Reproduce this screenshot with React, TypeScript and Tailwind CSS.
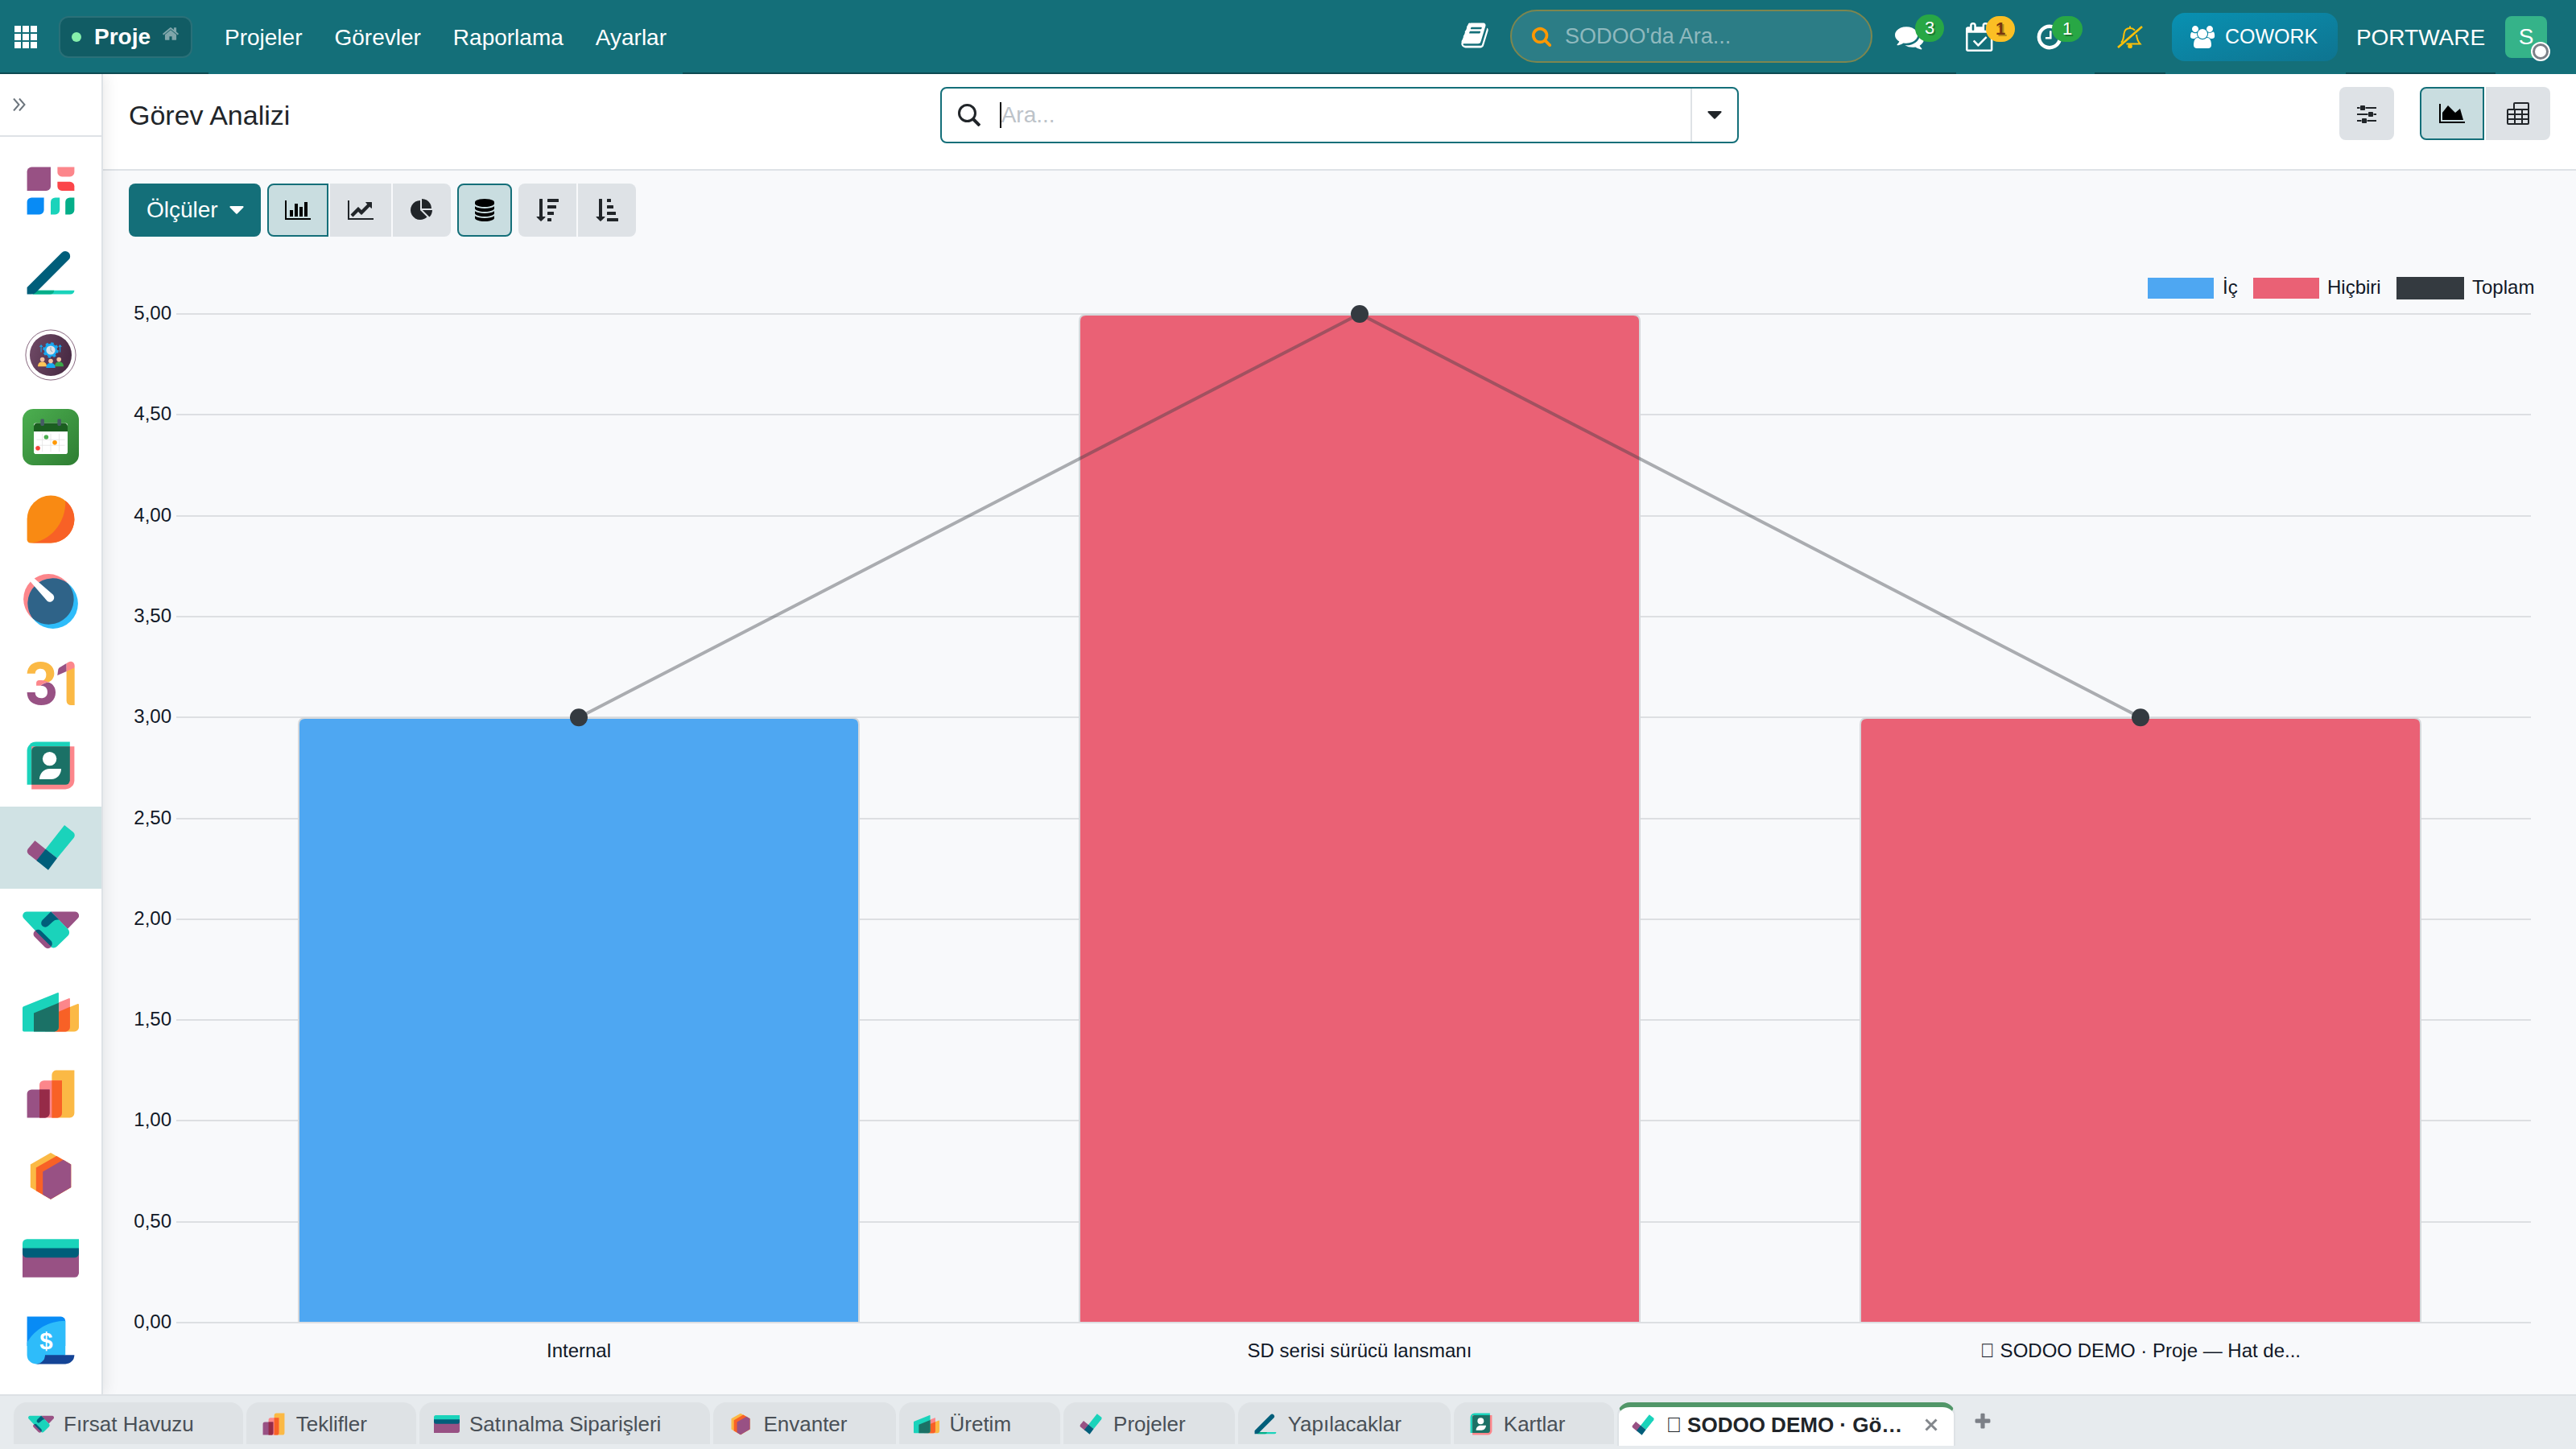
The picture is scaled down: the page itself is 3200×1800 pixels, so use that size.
import { useState } from 'react';
import type { ReactNode } from 'react';
import clsx from 'clsx';

// Font Awesome 4 glyph outlines, drawn on a 1792 unit grid
const FA = {
  home: 'M1472 992v480q0 26-19 45t-45 19h-384v-384h-256v384h-384q-26 0-45-19t-19-45v-480q0-1 .5-3t.5-3l575-474 575 474q1 2 1 6zm223-69l-62 74q-8 9-21 11h-3q-13 0-21-7l-692-577-692 577q-12 8-24 7-13-2-21-11l-62-74q-8-10-7-23.5t11-21.5l719-599q32-26 76-26t76 26l244 204v-195q0-14 9-23t23-9h192q14 0 23 9t9 23v408l219 182q10 8 11 21.5t-7 23.5z',
  book: 'M1703 478q40 57 18 129l-275 906q-19 64-76.5 107.5t-122.5 43.5h-923q-77 0-148.5-53.5t-99.5-131.5q-24-67-2-127 0-4 3-27t4-37q1-8-3-21.5t-3-19.5q2-11 8-21t16.5-23.5 16.5-23.5q23-38 45-91.5t30-91.5q3-10 .5-30t-.5-28q3-11 17-28t17-23q21-36 42-92t25-90q1-9-2.5-32t.5-28q4-13 22-30.5t22-22.5q19-26 42.5-84.5t27.5-96.5q1-8-3-25.5t-2-26.5q2-8 9-18t18-23 17-21q8-12 16.5-30.5t15-35 16-36 19.5-32 26.5-23.5 36-11.5 47.5 5.5l-1 3q38-9 51-9h761q74 0 114 56t18 130l-274 906q-36 119-71.5 153.5t-128.5 34.5h-869q-27 0-38 15-11 16-1 43 24 70 144 70h923q29 0 56-15.5t35-41.5l300-987q7-22 5-57 38 15 59 43zm-1064 2q-4 13 2 22.5t20 9.5h608q13 0 25.5-9.5t16.5-22.5l21-64q4-13-2-22.5t-20-9.5h-608q-13 0-25.5 9.5t-16.5 22.5zm-83 256q-4 13 2 22.5t20 9.5h608q13 0 25.5-9.5t16.5-22.5l21-64q4-13-2-22.5t-20-9.5h-608q-13 0-25.5 9.5t-16.5 22.5z',
  search: 'M1216 832q0-185-131.5-316.5t-316.5-131.5-316.5 131.5-131.5 316.5 131.5 316.5 316.5 131.5 316.5-131.5 131.5-316.5zm512 832q0 52-38 90t-90 38q-54 0-90-38l-343-342q-179 124-399 124-143 0-273.5-55.5t-225-150-150-225-55.5-273.5 55.5-273.5 150-225 225-150 273.5-55.5 273.5 55.5 225 150 150 225 55.5 273.5q0 220-124 399l343 343q37 37 37 90z',
  comments: 'M1408 768q0 139-94 257t-256.5 186.5-353.5 68.5q-86 0-176-16-124 88-278 128-36 9-86 16h-3q-11 0-20.5-8t-11.5-21q-1-3-1-6.5t.5-6.5 2-6l2.5-5 3.5-5.5 4-5 4.5-5 4-4.5q5-6 23-25t26-29.5 22.5-29 25-38.5 20.5-44q-124-72-195-177t-71-224q0-139 94-257t256.5-186.5 353.5-68.5 353.5 68.5 256.5 186.5 94 257zm384 256q0 120-71 224.5t-195 176.5q10 24 20.5 44t25 38.5 22.5 29 26 29.5 23 25q1 1 4 4.5t4.5 5 4 5 3.5 5.5l2.5 5 2 6 .5 6.5-1 6.5q-3 14-13 22t-22 7q-50-7-86-16-154-40-278-128-90 16-176 16-271 0-472-132 58 4 88 4 161 0 309-45t264-129q125-92 192-212t67-254q0-77-23-152 129 71 204 178t75 230z',
  calendar: 'M1303 964l-512 512q-10 9-23 9t-23-9l-288-288q-9-10-9-23t9-22l46-46q9-9 22-9t23 9l220 220 444-444q10-9 23-9t22 9l46 46q9 9 9 22t-9 23zm-1175 700h1408v-1024h-1408v1024zm384-1216v-288q0-14-9-23t-23-9h-64q-14 0-23 9t-9 23v288q0 14 9 23t23 9h64q14 0 23-9t9-23zm768 0v-288q0-14-9-23t-23-9h-64q-14 0-23 9t-9 23v288q0 14 9 23t23 9h64q14 0 23-9t9-23zm384-64v1280q0 52-38 90t-90 38h-1408q-52 0-90-38t-38-90v-1280q0-52 38-90t90-38h128v-96q0-66 47-113t113-47h64q66 0 113 47t47 113v96h384v-96q0-66 47-113t113-47h64q66 0 113 47t47 113v96h128q52 0 90 38t38 90z',
  clock: 'M1024 544v448q0 14-9 23t-23 9h-320q-14 0-23-9t-9-23v-64q0-14 9-23t23-9h224v-352q0-14 9-23t23-9h64q14 0 23 9t9 23zm416 352q0-148-73-273t-198-198-273-73-273 73-198 198-73 273 73 273 198 198 273 73 273-73 198-198 73-273zm224 0q0 209-103 385.5t-279.5 279.5-385.5 103-385.5-103-279.5-279.5-103-385.5 103-385.5 279.5-279.5 385.5-103 385.5 103 279.5 279.5 103 385.5z',
  users: 'M657 896q-162 5-265 128h-134q-82 0-138-40.5t-56-118.5q0-353 124-353 6 0 43.5 21t97.5 42.5 119 21.5q67 0 133-23-5 37-5 66 0 159 90 287zm1071 637q0 120-73 189.5t-194 69.5h-874q-121 0-194-69.5t-73-189.5q0-53 3.5-103.5t14-109 26.5-108.5 43-97.5 62-81 85.5-53.5 111.5-20q10 0 43 21.5t73 48 107 48 135 21.5 135-21.5 107-48 73-48 43-21.5q61 0 111.5 20t85.5 53.5 62 81 43 97.5 26.5 108.5 14 109 3.5 103.5zm-1024-1277q0 106-75 181t-181 75-181-75-75-181 75-181 181-75 181 75 75 181zm704 384q0 159-112.5 271.5t-271.5 112.5-271.5-112.5-112.5-271.5 112.5-271.5 271.5-112.5 271.5 112.5 112.5 271.5zm576 225q0 78-56 118.5t-138 40.5h-134q-103-123-265-128 90-128 90-287 0-29-5-66 66 23 133 23 59 0 119-21.5t97.5-42.5 43.5-21q124 0 124 353zm-128-609q0 106-75 181t-181 75-181-75-75-181 75-181 181-75 181 75 75 181z',
  sliders: 'M480 1408v128h-352v-128h352zm352-128q26 0 45 19t19 45v256q0 26-19 45t-45 19h-256q-26 0-45-19t-19-45v-256q0-26 19-45t45-19h256zm832 128v128h-736v-128h736zM352 384v128h-224v-128zM704 256q26 0 45 19t19 45v256q0 26-19 45t-45 19h-256q-26 0-45-19t-19-45v-256q0-26 19-45t45-19h256zM1664 384v128h-864v-128zM992 896v128h-864v-128zM1344 768q26 0 45 19t19 45v256q0 26-19 45t-45 19h-256q-26 0-45-19t-19-45v-256q0-26 19-45t45-19h256zM1664 896v128h-224v-128z',
  areaChart: 'M2048 1536v128h-2048v-1536h128v1408h1920zM1664 512l256 896h-1664v-576l448-576 576 576z',
  barChart: 'M640 896v512h-256v-512h256zM1024 384v1024h-256v-1024h256zM2048 1536v128h-2048v-1536h128v1408h1920zM1408 640v768h-256v-768h256zM1792 256v1152h-256v-1152h256z',
  lineChart: 'M2048 1536v128h-2048v-1536h128v1408h1920zM1920 288v435q0 21-19.5 29.5t-35.5-7.5l-121-121-633 633q-10 10-23 10t-23-10l-233-233-416 416-192-192 585-585q10-10 23-10t23 10l233 233 464-464-121-121q-16-16-7.5-35.5t29.5-19.5h435q14 0 23 9t9 23z',
  pieChart: 'M768 890l546 546q-106 108-247.5 168t-298.5 60q-209 0-385.5-103t-279.5-279.5-103-385.5 103-385.5 279.5-279.5 385.5-103v762zM955 896h773q0 157-60 298.5t-168 247.5zM1664 768h-768v-768q209 0 385.5 103t279.5 279.5 103 385.5z',
  database: 'M896 768q237 0 443-43t325-127v170q0 69-103 128t-280 93.5-385 34.5-385-34.5-280-93.5-103-128v-170q119 84 325 127t443 43zm0 768q237 0 443-43t325-127v170q0 69-103 128t-280 93.5-385 34.5-385-34.5-280-93.5-103-128v-170q119 84 325 127t443 43zm0-384q237 0 443-43t325-127v170q0 69-103 128t-280 93.5-385 34.5-385-34.5-280-93.5-103-128v-170q119 84 325 127t443 43zm0-1152q208 0 385 34.5t280 93.5 103 128v128q0 69-103 128t-280 93.5-385 34.5-385-34.5-280-93.5-103-128v-128q0-69 103-128t280-93.5 385-34.5z',
  plus: 'M1600 736v192q0 40-28 68t-68 28h-416v416q0 40-28 68t-68 28h-192q-40 0-68-28t-28-68v-416h-416q-40 0-68-28t-28-68v-192q0-40 28-68t68-28h416v-416q0-40 28-68t68-28h192q40 0 68 28t28 68v416h416q40 0 68 28t28 68z',
};

interface GlyphProps {
  name: keyof typeof FA;
  wide?: boolean;
  className?: string;
}

function Glyph({ name, wide = false, className = 'w-7 h-7' }: GlyphProps) {
  return (
    <svg viewBox={wide ? '0 0 2048 1792' : '0 0 1792 1792'} fill="currentColor" className={clsx('shrink-0', className)} aria-hidden="true">
      <path d={FA[name]} />
    </svg>
  );
}

function SortGlyph({ widths }: { widths: number[] }) {
  return (
    <svg viewBox="0 0 1792 1792" fill="currentColor" className="w-7 h-7" aria-hidden="true">
      <path d="M736 1440q0 12-10 24l-319 319q-10 9-23 9-12 0-23-9l-320-320q-15-16-7-35 8-20 30-20h192v-1376q0-14 9-23t23-9h192q14 0 23 9t9 23v1376h192q14 0 23 9t9 23z" />
      {widths.map((w, i) => (
        <rect key={w} x="896" y={i * 512} width={w} height="256" rx="32" />
      ))}
    </svg>
  );
}

function Caret({ className }: { className?: string }) {
  return (
    <svg viewBox="0 0 18 10" fill="currentColor" className={clsx('w-[18px] h-[10px] shrink-0', className)} aria-hidden="true">
      <path d="M1.4 0H16.6a1 1 0 0 1 .7 1.7L9.7 9.5a1 1 0 0 1-1.4 0L.7 1.7A1 1 0 0 1 1.4 0z" />
    </svg>
  );
}

// App artwork on a 50 unit grid
const ART: Record<string, ReactNode> = {
  dashboards: (
    <>
      <path fill="#985184" d="M8 4H25V21a4 4 0 0 1-4 4H4V8a4 4 0 0 1 4-4z" />
      <path fill="#FC868B" d="M31 4H46V8.5a4 4 0 0 1-4 4H35a4 4 0 0 1-4-4z" />
      <path fill="#FB4549" d="M31 17H42a4 4 0 0 1 4 4V25H35a4 4 0 0 1-4-4z" />
      <path fill="#088BF5" d="M8 31H19V42a4 4 0 0 1-4 4H4V35a4 4 0 0 1 4-4z" />
      <path fill="#1AD3BB" d="M29 31H33V42a4 4 0 0 1-4 4H25V35a4 4 0 0 1 4-4z" />
      <path fill="#04AE89" d="M42 31H46V42a4 4 0 0 1-4 4H38V35a4 4 0 0 1 4-4z" />
    </>
  ),
  todo: (
    <>
      <path fill="#1AD3BB" d="M9 40.5H46a3.5 3.5 0 0 1-3.5 3.5H9z" />
      <path fill="#04AE89" d="M9 40.5H28a3.5 3.5 0 0 1-3.5 3.5H9z" />
      <path fill="#005E7A" d="M4 44V37.8L34.7 7.1a4.4 4.4 0 0 1 6.3 6.2L12.1 42.2A6 6 0 0 1 7.8 44z" />
    </>
  ),
  team: (
    <>
      <defs>
        <linearGradient id="team-bg" x1="0" y1="0" x2="1" y2="0.3">
          <stop offset="0" stopColor="#714B67" />
          <stop offset="1" stopColor="#4A2C45" />
        </linearGradient>
      </defs>
      <circle cx="25" cy="25" r="22.2" fill="#fff" stroke="#714B67" strokeWidth="0.6" />
      <circle cx="25" cy="25" r="18.6" fill="url(#team-bg)" />
      <circle cx="25" cy="20.7" r="5.8" fill="#18A8F0" />
      <circle cx="25" cy="20.7" r="6.1" fill="none" stroke="#18A8F0" strokeWidth="1.8" strokeDasharray="2.4 2.39" />
      <circle cx="25" cy="20.7" r="4" fill="#DDE3E8" />
      <path d="M25 18V21l1.6 1" fill="none" stroke="#8FA0AD" strokeWidth="0.7" />
      <path d="M16.5 22.5V16.5M15.3 17.8l1.2-1.5 1.2 1.5M33.3 22.5V16.5M32.1 17.8l1.2-1.5 1.2 1.5" fill="none" stroke="#18A8F0" strokeWidth="0.8" />
      <path fill="#FFC658" d="M13.6 35.2c0-2.8 1.5-4.2 3.9-4.2s3.9 1.4 3.9 4.2z" />
      <path fill="#3BA84A" d="M28.6 35.2c0-2.8 1.5-4.2 3.9-4.2s3.9 1.4 3.9 4.2z" />
      <path fill="#18A8F0" d="M21 36.5c0-2.9 1.5-4.3 4-4.3s4 1.4 4 4.3z" />
      <circle cx="17.6" cy="29" r="2" fill="#F2C3A5" />
      <circle cx="32.3" cy="29" r="2" fill="#F2C3A5" />
      <circle cx="25" cy="30.4" r="2" fill="#F2C3A5" />
    </>
  ),
  planner: (
    <>
      <defs>
        <linearGradient id="planner-bg" x1="0" y1="0" x2="1" y2="1">
          <stop offset="0" stopColor="#4CAF50" />
          <stop offset="1" stopColor="#2E7D32" />
        </linearGradient>
      </defs>
      <rect width="50" height="50" rx="9.5" fill="url(#planner-bg)" />
      <rect x="10" y="12.5" width="30" height="27.5" rx="2" fill="#fff" />
      <path d="M13 12.5H37a3 3 0 0 1 3 3V20H10V15.5a3 3 0 0 1 3-3z" fill="#1B5E20" />
      <rect x="16" y="9" width="3.2" height="6" rx="1" fill="#455A64" />
      <rect x="31" y="9" width="3.2" height="6" rx="1" fill="#455A64" />
      <path d="M17.6 22V38M25 22V38M32.5 22V38M12.5 27.3H37.5M12.5 32.3H37.5" stroke="#E0E0E0" strokeWidth="0.5" />
      <circle cx="21" cy="25" r="2" fill="#4CAF50" />
      <circle cx="28.6" cy="29.9" r="2" fill="#FF9800" />
      <circle cx="13.6" cy="34.8" r="2" fill="#F44336" />
    </>
  ),
  discuss: (
    <>
      <path fill="#F98A13" d="M4 25a21 21 0 1 1 21 21H7a3 3 0 0 1-3-3z" />
      <path fill="#F86126" d="M38 8.5A21 21 0 0 1 25 46H7C24 45 39 28 38 8.5z" />
    </>
  ),
  gauge: (
    <>
      <circle cx="23" cy="23" r="22.2" fill="#FC868B" />
      <circle cx="27" cy="27" r="22.2" fill="#2EBCFA" />
      <path fill="#2F6388" d="M40.6 9.4A22.2 22.2 0 0 1 9.4 40.6 22.2 22.2 0 0 1 40.6 9.4z" />
      <path fill="#fff" d="M6.5 7L10 4.2 26.7 18.7a3.9 3.9 0 0 1-4.7 6.2z" />
    </>
  ),
  calendar: (
    <>
      <path fill="#FBB945" d="M4 16.2C4.5 9.5 9 5.7 16 5.7s12.1 4 12.1 10.3c0 3.8-2 6.5-5.1 8L17 23c2.7-.8 4-2.8 4-5.800 0-3.200-2-5.200-5-5.200-2.800 0-4.500 1.500-4.800 4.200z" />
      <path fill="#985184" d="M16 27c3-2.5 6-3.4 8-2.8 3.5 1.6 5.3 4.8 5.3 8.8 0 7-5.3 11.3-12.8 11.3S4 40 4 32.9h7.2c0 3.3 2 5.1 5.3 5.1 3.5 0 5.6-2 5.6-5.4 0-3.6-2.1-5.6-6.1-5.6z" />
      <path fill="#FC868B" d="M12.2 27V24.5c0-1.5 1-2.4 2.5-2.4 3 0 6.3.4 8.3 1.9-2.5.2-5 1.2-7 3z" />
      <path fill="#FBB945" d="M39 11H46.2V44.3H43a4 4 0 0 1-4-4z" />
      <path fill="#985184" d="M30.9 17.9L31.6 12.8c.2-1 .7-1.6 1.5-2.1L39 7.1V14.3z" />
      <path fill="#FC868B" d="M39 7.1l1.8-1C43.5 4.7 46.2 6.5 46.2 9.4V11L39 14.3z" />
    </>
  ),
  contacts: (
    <>
      <path fill="#1AD3BB" d="M12 4H42V42H4V12a8 8 0 0 1 8-8z" />
      <path fill="#FC868B" d="M8 8H46V38a8 8 0 0 1-8 8H8z" />
      <path fill="#1B7166" d="M12 8H42V38a4 4 0 0 1-4 4H8V12a4 4 0 0 1 4-4z" />
      <circle cx="24" cy="19" r="6.2" fill="#fff" />
      <path fill="#fff" d="M15 37.2c0-5.2 4-9.3 9-9.3H34.3c0 5.2-3.8 9.3-8.8 9.3z" />
    </>
  ),
  project: (
    <>
      <path fill="#985184" d="M11 18.8L22.5 28 14 37.7 5.4 30.9A3.6 3.6 0 0 1 4.8 26z" />
      <path fill="#1AD3BB" d="M37.2 5L45 11.2a3.6 3.6 0 0 1 .5 5L30.7 34.3 20.5 26.2z" />
      <path fill="#005E7A" d="M20.5 26.2L30.7 34.3 22.8 44.8 12.4 36.4z" />
    </>
  ),
  crm: (
    <>
      <path fill="#985184" d="M25.2 9H46.5a3.5 3.5 0 0 1 2.6 5.9L40 24.3z" />
      <path fill="#1AD3BB" d="M3.7 9H25.2L40.2 24.3a4.3 4.3 0 0 1 .4 5.7L30.5 39.8a4.3 4.3 0 0 1-6 0L1 14.9A3.6 3.6 0 0 1 3.7 9z" />
      <path fill="#985184" d="M10.7 26.2a3.6 3.6 0 0 1 5.1 0L25 35.5a3.6 3.6 0 0 1-5.1 5.1L10.7 31.3a3.6 3.6 0 0 1 0-5.1z" />
      <path fill="#005E7A" d="M11.7 25.5a3.6 3.6 0 0 1 5 .7L25 34.5a3.7 3.7 0 0 1 .4 5.2L24 38.5 11.7 26.2z" />
      <path fill="#005E7A" d="M25.2 9L32.6 16.3c-2.3-.5-4.2 0-5.8 1.6L22.7 21.6a3.6 3.6 0 0 1-5.1-5.1z" />
    </>
  ),
  mrp: (
    <>
      <path fill="#FBB945" d="M30 25.5L49 17.9a.8.8 0 0 1 1 .7V38.5a4 4 0 0 1-4 4H30z" />
      <path fill="#FC868B" d="M20 21.5L41 13a.8.8 0 0 1 1.1.7V38.5a4 4 0 0 1-4 4H20z" />
      <path fill="#F86126" d="M30 25.7L42.1 20.6V38.5a4 4 0 0 1-4 4H28z" />
      <path fill="#1AD3BB" d="M0 21.5a1.5 1.5 0 0 1 .9-1.4L31 8a.8.8 0 0 1 1.1.7V38.5a4 4 0 0 1-4 4H1.2a1.2 1.2 0 0 1-1.2-1.2z" />
      <path fill="#1B7166" d="M10 26L32.1 17V38.5a4 4 0 0 1-4 4H10z" />
    </>
  ),
  sales: (
    <>
      <path fill="#FBB945" d="M29.7 4H46V42a4 4 0 0 1-4 4H26V8a4 4 0 0 1 3.7-4z" />
      <path fill="#FC868B" d="M19 13H35V42a4 4 0 0 1-4 4H15V17a4 4 0 0 1 4-4z" />
      <path fill="#F86126" d="M26 13H35V42a4 4 0 0 1-4 4H26z" />
      <path fill="#985184" d="M8 21H24V42a4 4 0 0 1-4 4H4V25a4 4 0 0 1 4-4z" />
      <path fill="#962B48" d="M15 21H24V42a4 4 0 0 1-4 4H15z" />
    </>
  ),
  stock: (
    <>
      <path fill="#FBB945" d="M25 4.2L43 14.6V35L25 45.6 7 35V14.6z" />
      <path fill="#F86126" d="M30.2 7.2L43 14.6V35L25 45.6 12 38.1V17.5z" />
      <path fill="#985184" d="M36.2 10.6L43 14.6V35L25 45.6 18 41.5V21z" />
    </>
  ),
  purchase: (
    <>
      <path fill="#985184" d="M0 16H50V38a4 4 0 0 1-4 4H0z" />
      <path fill="#1AD3BB" d="M4 8H50V18H0V12a4 4 0 0 1 4-4z" />
      <path fill="#005E7A" d="M0 16H50V20.5a4 4 0 0 1-4 4H4a4 4 0 0 1-4-4z" />
    </>
  ),
  invoice: (
    <>
      <path fill="#088BF5" d="M4 4H34a4 4 0 0 1 4 4V30H4z" />
      <path fill="#2EBCFA" d="M38 7.7V38L14 46H12a8 8 0 0 1-8-8V27C11 15 23 8 38 7.7z" />
      <path fill="#144496" d="M20 38H46a8 8 0 0 1-8 8H12a8 8 0 0 0 8-8z" />
      <text x="21" y="32.5" textAnchor="middle" fontSize="21" fontWeight="700" fill="#fff" fontFamily="Liberation Sans, sans-serif">$</text>
    </>
  ),
};

function AppArt({ name, className }: { name: string; className: string }) {
  return (
    <svg viewBox="0 0 50 50" className={clsx('shrink-0', className)} aria-hidden="true">
      {ART[name]}
    </svg>
  );
}

const SIDEBAR = [
  { id: 'dashboards', label: 'Panolar' },
  { id: 'todo', label: 'Yapılacaklar' },
  { id: 'team', label: 'Ekip' },
  { id: 'planner', label: 'Planlama' },
  { id: 'discuss', label: 'Mesajlaşma' },
  { id: 'gauge', label: 'Göstergeler' },
  { id: 'calendar', label: 'Takvim' },
  { id: 'contacts', label: 'Kartlar' },
  { id: 'project', label: 'Proje' },
  { id: 'crm', label: 'CRM' },
  { id: 'mrp', label: 'Üretim' },
  { id: 'sales', label: 'Satış' },
  { id: 'stock', label: 'Envanter' },
  { id: 'purchase', label: 'Satınalma' },
  { id: 'invoice', label: 'Faturalama' },
];

const TABS = [
  { icon: 'crm', label: 'Fırsat Havuzu' },
  { icon: 'sales', label: 'Teklifler' },
  { icon: 'purchase', label: 'Satınalma Siparişleri' },
  { icon: 'stock', label: 'Envanter' },
  { icon: 'mrp', label: 'Üretim' },
  { icon: 'project', label: 'Projeler' },
  { icon: 'todo', label: 'Yapılacaklar' },
  { icon: 'contacts', label: 'Kartlar' },
];

const MENU = ['Projeler', 'Görevler', 'Raporlama', 'Ayarlar'];

const CHART_DATA = [
  { label: 'Internal', value: 3, color: '#4ea7f2' },
  { label: 'SD serisi sürücü lansmanı', value: 5, color: '#ea6175' },
  { label: '\uE000 SODOO DEMO · Proje — Hat de...', value: 3, color: '#ea6175' },
];

function Navbar() {
  return (
    <header className="relative z-20 flex h-[92px] shrink-0 items-stretch bg-[#146f79] text-[28px] text-white shadow-[inset_0_-2px_0_#0d4a51]">
      <div className="flex w-[259px] items-center pl-[18px]">
        <button aria-label="Uygulamalar" className="grid grid-cols-3 gap-[2px]">
          {Array.from({ length: 9 }, (_, i) => (
            <span key={i} className="h-2 w-2 bg-white" />
          ))}
        </button>
        <button className="ml-[27px] flex h-[52px] items-center rounded-xl border-2 border-[#2a7078] bg-[#115c64] px-[14px] font-bold">
          <span className="mr-4 h-3 w-3 rounded-full bg-[#86efac]" />
          Proje
          <Glyph name="home" className="mb-2 ml-[14px] h-[22px] w-[22px] text-[#7fa5aa]" />
        </button>
      </div>
      <nav className="flex bg-[#146f79]">
        {MENU.map((item) => (
          <a key={item} href="#" className="flex items-center px-5 pt-[2px]">
            {item}
          </a>
        ))}
      </nav>

      <button aria-label="Bilgi bankası" className="ml-auto pb-1">
        <Glyph name="book" className="h-9 w-9" />
      </button>
      <label className="my-3 ml-[26px] flex h-[66px] w-[450px] items-center rounded-full border-2 border-[#7d864f] bg-[#2c7d86] pl-6">
        <Glyph name="search" className="h-[26px] w-[26px] text-[#ff9800]" />
        <input
          type="text"
          aria-label="SODOO'da Ara"
          placeholder="SODOO'da Ara..."
          className="ml-4 min-w-0 flex-1 bg-transparent text-[27px] outline-none placeholder:text-[#8fb9be]"
        />
      </label>
      <button aria-label="Mesajlar" className="relative ml-7 w-[76px]">
        <Glyph name="comments" className="h-9 w-9" />
        <span className="absolute left-[25px] top-[18px] flex h-[34px] w-9 items-center justify-center rounded-full bg-[#28a745] text-[22px] leading-none [text-shadow:2px_2px_0_rgba(0,0,0,0.3)]">
          3
        </span>
      </button>
      <div className="flex bg-[#146f79]">
        <button aria-label="Aktiviteler" className="relative w-[86px] pl-3">
          <Glyph name="calendar" className="h-9 w-9" />
          <span className="absolute left-[37px] top-5 flex h-8 w-9 items-center justify-center rounded-full bg-[#fbbf24] text-[22px] font-bold leading-none text-[#78350f] [text-shadow:2px_2px_0_rgba(0,0,0,0.3)]">
            1
          </span>
        </button>
        <button aria-label="Zaman çizelgesi" className="relative w-[86px] pl-3">
          <Glyph name="clock" className="h-9 w-9" />
          <span className="absolute left-[33px] top-5 flex h-8 w-[38px] items-center justify-center rounded-full bg-[#28a745] text-[22px] leading-none [text-shadow:2px_2px_0_rgba(0,0,0,0.3)]">
            1
          </span>
        </button>
      </div>
      <button aria-label="Bildirimler kapalı" className="flex w-[88px] items-center justify-center">
        <svg viewBox="0 0 32 28" fill="none" stroke="#ffc107" strokeWidth="2" className="h-7 w-8" aria-hidden="true">
          <path d="M5 21c3-3 3-6 3.5-11C9 5.5 12 3 16 3c2.5 0 4.5 1 6 2.7M24 11c.4 5 1.5 8 4.5 11.5H11.5" />
          <path d="M16 3V.5" />
          <circle cx="16" cy="25.5" r="2.8" fill="#ffc107" stroke="none" />
          <path d="M1 27L31 1" strokeWidth="2.6" />
        </svg>
      </button>
      <div className="flex w-56 items-center bg-[#146f79] pl-2 pr-[10px]">
        <button className="flex h-[60px] w-full items-center gap-3 rounded-2xl bg-linear-to-br from-[#0891b2] to-[#0e7490] pl-[22px] text-[25px]">
          <Glyph name="users" wide className="h-7 w-8" />
          COWORK
        </button>
      </div>
      <button className="w-[186px] pt-[2px]">PORTWARE</button>
      <div className="flex w-[100px] items-center bg-[#146f79] pl-3">
        <button aria-label="Kullanıcı menüsü" className="relative h-[52px] w-[52px] rounded-lg bg-[#35b389]">
          S
          <span className="absolute -bottom-1 -right-1 h-6 w-6 rounded-full border-2 border-white bg-[#7c8087] p-[3px]">
            <span className="block h-full w-full rounded-full bg-white" />
          </span>
        </button>
      </div>
    </header>
  );
}

function Sidebar({ active, onSelect }: { active: string; onSelect: (id: string) => void }) {
  return (
    <aside className="relative z-10 flex w-32 shrink-0 flex-col border-r-2 border-[#dee2e6] bg-white shadow-[4px_0_16px_rgba(0,0,0,0.08)]">
      <div className="flex h-[78px] items-center border-b-2 border-[#dee2e6] pl-4">
        <button aria-label="Menüyü genişlet">
          <svg viewBox="0 0 16 16" fill="none" stroke="#6c757d" strokeWidth="2" className="h-4 w-4" aria-hidden="true">
            <path d="M1 .5L7.500 8 1 15.500M8 .5L14.500 8 8 15.500" />
          </svg>
        </button>
      </div>
      <nav className="flex flex-col pt-4">
        {SIDEBAR.map((app) => (
          <button
            key={app.id}
            aria-label={app.label}
            onClick={() => onSelect(app.id)}
            className={clsx('flex h-[102px] items-center justify-center', active === app.id && 'bg-[#d0e2e4]')}
          >
            <AppArt name={app.id} className="h-[70px] w-[70px]" />
          </button>
        ))}
      </nav>
    </aside>
  );
}

function ControlPanel() {
  return (
    <div className="flex items-start border-b-2 border-[#dee2e6] bg-white px-8 pb-8 pt-4 text-[#212529]">
      <h1 className="flex h-[70px] flex-1 items-center text-[34px]">Görev Analizi</h1>
      <div className="flex h-[70px] w-[33%] items-center rounded-lg border-2 border-[#146f79]">
        <svg viewBox="0 0 28 28" fill="none" stroke="currentColor" strokeWidth="3" className="ml-5 h-7 w-7 shrink-0" aria-hidden="true">
          <circle cx="11.5" cy="11.5" r="10" />
          <path d="M18.5 18.5L27 27" strokeWidth="4" />
        </svg>
        <span className="ml-6 h-8 w-[2px] bg-black" />
        <input
          type="text"
          aria-label="Ara"
          placeholder="Ara..."
          className="min-w-0 flex-1 bg-transparent text-[28px] outline-none placeholder:text-[#bdc3c9]"
        />
        <button aria-label="Arama seçenekleri" className="flex h-full w-[58px] items-center justify-center border-l-2 border-[#dee2e6]">
          <Caret />
        </button>
      </div>
      <div className="flex flex-1 justify-end">
        <button aria-label="Ayarlar" className="flex h-[66px] w-[68px] items-center justify-center rounded-lg bg-[#dee2e6]">
          <Glyph name="sliders" />
        </button>
        <button aria-label="Grafik" aria-pressed="true" className="ml-8 flex h-[66px] w-20 items-center justify-center rounded-l-lg border-2 border-[#146f79] bg-[#c9dde0] text-black">
          <Glyph name="areaChart" wide className="h-7 w-8" />
        </button>
        <button aria-label="Pivot" className="ml-[2px] flex h-[66px] w-20 items-center justify-center rounded-r-lg bg-[#dee2e6]">
          <svg viewBox="0 0 28 28" fill="none" stroke="currentColor" strokeWidth="2" className="h-7 w-7" aria-hidden="true">
            <path d="M9 9V2a1 1 0 0 1 1-1H26a1 1 0 0 1 1 1V26a1 1 0 0 1-1 1H2a1 1 0 0 1-1-1V10a1 1 0 0 1 1-1H27M1 15H27M1 21H27M10 9V27M19 9V27" />
          </svg>
        </button>
      </div>
    </div>
  );
}

function Toolbar() {
  const [mode, setMode] = useState('bar');
  const base = 'flex h-[66px] items-center justify-center';
  const on = 'border-2 border-[#146f79] bg-[#c9dde0] text-black';
  const off = 'bg-[#dee2e6] text-[#212529]';

  return (
    <div className="flex gap-2 px-8 pt-4">
      <button className="flex h-[66px] items-center gap-[14px] rounded-lg bg-[#146f79] pl-[22px] pr-[21px] text-[28px] text-white">
        Ölçüler
        <Caret />
      </button>
      <div className="flex gap-[2px]">
        <button aria-label="Çubuk grafik" onClick={() => setMode('bar')} className={clsx(base, 'w-[76px] rounded-l-lg', mode === 'bar' ? on : off)}>
          <Glyph name="barChart" wide className="h-7 w-8" />
        </button>
        <button aria-label="Çizgi grafik" onClick={() => setMode('line')} className={clsx(base, 'w-[76px]', mode === 'line' ? on : off)}>
          <Glyph name="lineChart" wide className="h-7 w-8" />
        </button>
        <button aria-label="Pasta grafik" onClick={() => setMode('pie')} className={clsx(base, 'w-[72px] rounded-r-lg', mode === 'pie' ? on : off)}>
          <Glyph name="pieChart" />
        </button>
      </div>
      <button aria-label="Yığılmış" aria-pressed="true" className={clsx(base, 'w-[68px] rounded-lg', on)}>
        <Glyph name="database" />
      </button>
      <div className="flex gap-[2px]">
        <button aria-label="Azalan" className={clsx(base, off, 'w-[72px] rounded-l-lg')}>
          <SortGlyph widths={[896, 704, 512, 320]} />
        </button>
        <button aria-label="Artan" className={clsx(base, off, 'w-[72px] rounded-r-lg')}>
          <SortGlyph widths={[320, 512, 704, 896]} />
        </button>
      </div>
    </div>
  );
}

// Plot area inside the 3072 x 1422 chart canvas
const PLOT = { left: 106, right: 3016, top: 80, bottom: 1333 };
const MAX = 5;

function TaskChart() {
  const step = (PLOT.right - PLOT.left) / CHART_DATA.length;
  const y = (v: number) => PLOT.bottom - (v / MAX) * (PLOT.bottom - PLOT.top);
  const x = (i: number) => PLOT.left + step * (i + 0.5);
  const ticks = Array.from({ length: 11 }, (_, i) => i / 2);
  const barWidth = 696;

  return (
    <svg viewBox="0 0 3072 1422" className="mt-4 min-h-0 w-full flex-1" fontFamily="Liberation Sans, Arial, sans-serif" fontSize="24" fill="#111827" role="img" aria-label="Görev Analizi">
      {ticks.map((t) => (
        <g key={t}>
          <line x1={PLOT.left - 15} x2={PLOT.right} y1={Math.round(y(t))} y2={Math.round(y(t))} stroke="#dddfe2" strokeWidth="2" />
          <text x="85" y={Math.round(y(t)) + 7} textAnchor="end">
            {t.toFixed(2).replace('.', ',')}
          </text>
        </g>
      ))}

      {CHART_DATA.map((d, i) => {
        const left = x(i) - barWidth / 2;
        const top = Math.round(y(d.value)) + 1;
        return (
          <g key={d.label}>
            <path
              d={`M${left} ${PLOT.bottom - 1}V${top + 8}q0-8 8-8H${left + barWidth - 8}q8 0 8 8V${PLOT.bottom - 1}`}
              fill={d.color}
              stroke="#d5d8db"
              strokeWidth="2"
            />
            <text x={x(i)} y="1376" textAnchor="middle">
              {d.label}
            </text>
          </g>
        );
      })}

      <polyline points={CHART_DATA.map((d, i) => `${x(i)},${y(d.value)}`).join(' ')} fill="none" stroke="#343a40" strokeOpacity="0.4" strokeWidth="4" />
      {CHART_DATA.map((d, i) => (
        <circle key={d.label} cx={x(i)} cy={y(d.value)} r="11" fill="#343a40" />
      ))}

      {/* Legend */}
      <rect x="2540" y="35" width="82" height="26" fill="#4ea7f2" />
      <text x="2633" y="55">İç</text>
      <rect x="2671" y="35" width="82" height="26" fill="#ea6175" />
      <text x="2763" y="55">Hiçbiri</text>
      <rect x="2849" y="34" width="84" height="28" fill="#343a40" />
      <text x="2943" y="55">Toplam</text>
    </svg>
  );
}

function TabBar() {
  return (
    <footer className="relative z-20 flex h-[68px] shrink-0 items-start gap-1 border-t-2 border-[#dde1e5] bg-[#e7ebee] pl-[17px] pr-4 pt-2 text-[26px] text-[#495057]">
      {TABS.map((tab) => (
        <button key={tab.label} className="flex h-[52px] items-center gap-3 rounded-t-2xl bg-[#dee2e5] pl-[18px] pr-[61px] pt-[2px]">
          <AppArt name={tab.icon} className="h-8 w-8" />
          {tab.label}
        </button>
      ))}
      <div className="flex h-[54px] w-[420px] items-center rounded-t-2xl border-x-2 border-t-[6px] border-x-[#dee2e6] border-t-[#519668] bg-white pb-1 pl-[14px] pr-5 text-[#212529]">
        <button className="flex flex-1 items-center gap-3 font-bold">
          <AppArt name="project" className="h-8 w-8" />
          <span className="whitespace-nowrap">{'\uE000'} SODOO DEMO · Gö…</span>
        </button>
        <button aria-label="Sekmeyi kapat" className="shrink-0">
          <svg viewBox="0 0 16 16" stroke="#83878c" strokeWidth="3" className="h-4 w-4" aria-hidden="true">
            <path d="M1.5 1.5L14.5 14.5M14.5 1.5L1.5 14.5" />
          </svg>
        </button>
      </div>
      <button aria-label="Yeni sekme" className="ml-[18px] mt-3 text-[#7c8087]">
        <Glyph name="plus" className="h-6 w-6" />
      </button>
    </footer>
  );
}

export default function App() {
  const [active, setActive] = useState('project');

  return (
    <div className="flex h-screen flex-col overflow-hidden bg-[#f8f9fb] font-['Liberation_Sans',Arial,sans-serif]">
      <Navbar />
      <div className="flex min-h-0 flex-1">
        <Sidebar active={active} onSelect={setActive} />
        <main className="flex min-w-0 flex-1 flex-col">
          <ControlPanel />
          <Toolbar />
          <TaskChart />
        </main>
      </div>
      <TabBar />
    </div>
  );
}
